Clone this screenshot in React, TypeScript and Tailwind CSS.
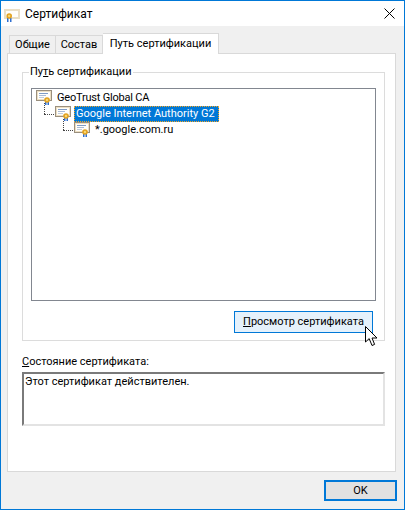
function CertIcon() {
  return (
    <svg width="16" height="16" viewBox="0 0 16 16" className="shrink-0">
      <rect x="0.5" y="0.5" width="15" height="10" fill="#fffefb" stroke="#9a8f7e" />
      <rect x="1.5" y="1.5" width="13" height="8" fill="none" stroke="#ecdfc4" />
      <rect x="3" y="3" width="9" height="1" fill="#7f9cc6" />
      <rect x="3" y="5" width="7" height="1" fill="#a9bbd6" />
      <rect x="3" y="7" width="5" height="1" fill="#c2cede" />
      <rect x="9" y="11" width="1.5" height="4" fill="#2f6fd0" />
      <rect x="11.5" y="11" width="1.5" height="4" fill="#2f6fd0" />
      <circle cx="11" cy="10" r="2.8" fill="#e3a21f" />
      <circle cx="11" cy="10" r="1.2" fill="#f7d774" />
    </svg>
  );
}

function TitleIcon() {
  return (
    <svg width="16" height="13" viewBox="0 0 16 13" className="mt-[8px] shrink-0 self-start">
      <rect x="0" y="0" width="16" height="10" fill="#eadfc6" />
      <rect x="2" y="2" width="12" height="6" fill="#fffefb" />
      <rect x="3" y="9" width="1.5" height="4" fill="#2f6fd0" />
      <rect x="6" y="9" width="1.5" height="4" fill="#2f6fd0" />
      <circle cx="5.2" cy="7" r="2.8" fill="#e3a21f" />
      <circle cx="5.2" cy="7" r="1.2" fill="#f7d774" />
    </svg>
  );
}

function TreeRow({ depth, label, selected }: { depth: number; label: string; selected?: boolean }) {
  return (
    <div className={`relative flex h-[16px] items-center ${depth === 0 ? "pl-[4px]" : depth === 1 ? "pl-[23px]" : "pl-[42px]"}`}>
      {depth > 0 && (
        <>
          <div className={`absolute top-[-3px] h-[11px] w-0 border-l border-dotted border-[#444] ${depth === 1 ? "left-[12px]" : "left-[31px]"}`} />
          <div className={`absolute top-[8px] h-0 w-[10px] border-t border-dotted border-[#444] ${depth === 1 ? "left-[12px]" : "left-[31px]"}`} />
        </>
      )}
      <CertIcon />
      {selected ? (
        <span className="ml-[3px] flex h-[16px] w-[145px] items-center whitespace-nowrap border border-dotted border-[#f5a623] bg-[#0078d7] px-[1px] text-white">{label}</span>
      ) : (
        <span className={`ml-[5px] whitespace-nowrap ${depth === 0 ? "tracking-[-0.2px]" : ""}`}>{label}</span>
      )}
    </div>
  );
}

export default function App() {
  return (
    <div className="relative flex h-[510px] w-[405px] flex-col overflow-hidden border border-[#0078d7] bg-[#f0f0f0] font-['Roboto','Noto_Sans',sans-serif] text-[11px] leading-[16px] text-black">
      {/* Title bar */}
      <div className="flex h-[25px] shrink-0 items-center bg-white pl-[3px] pr-[9px]">
        <TitleIcon />
        <span className="ml-[5px] flex-1 text-[12px]">Сертификат</span>
        <svg width="11" height="11" viewBox="0 0 11 11">
          <path d="M0.5 0.5 L10.5 10.5 M10.5 0.5 L0.5 10.5" stroke="#000" strokeWidth="1" fill="none" />
        </svg>
      </div>

      {/* Tabs */}
      <div className="flex h-[27px] shrink-0 items-end pl-[8px]">
        <div className="flex h-[18px] w-[47px] items-center justify-center border border-b-0 border-[#d9d9d9] bg-[#f0f0f0]">Общие</div>
        <div className="flex h-[18px] w-[47px] items-center justify-center border border-b-0 border-l-0 border-[#d9d9d9] bg-[#f0f0f0]">Состав</div>
        <div className="relative top-[1px] z-10 flex h-[21px] w-[116px] items-center justify-center border border-b-0 border-l-0 border-[#d9d9d9] bg-white">Путь сертификации</div>
      </div>

      {/* Panel */}
      <div className="ml-[6px] flex h-[419px] w-[389px] shrink-0 flex-col border border-[#d9d9d9] bg-white pl-[14px] pt-[10px]">
        <fieldset className="flex w-[363px] flex-col border border-[#dcdcdc] px-[8px] pb-[7px]">
          <legend className="-ml-[2px] px-[1px]">Пу<span className="underline">т</span>ь сертификации</legend>
          <div className="mt-[8px] h-[213px] border border-[#828790] bg-white pt-[1px]">
            <TreeRow depth={0} label="GeoTrust Global CA" />
            <TreeRow depth={1} label="Google Internet Authority G2" selected />
            <TreeRow depth={2} label="*.google.com.ru" />
          </div>
          <div className="mt-[10px] flex justify-end pr-[3px]">
            <button className="h-[22px] w-[139px] border border-[#0078d7] bg-[#e5f1fb] text-center"><span className="underline">П</span>росмотр сертификата</button>
          </div>
        </fieldset>
        <label className="mt-[13px] block"><span className="underline">С</span>остояние сертификата:</label>
        <div className="mt-[2px] h-[54px] w-[363px] border-[2px] border-[#e3e3e3] border-l-[#7a7a7a] border-t-[#7a7a7a] bg-white pl-[1px]">Этот сертификат действителен.</div>
      </div>

      {/* Footer */}
      <div className="flex flex-1 items-start justify-end pr-[7px] pt-[8px]">
        <button className="h-[21px] w-[73px] border-[2px] border-[#0078d7] bg-[#e1e1e1] text-center leading-[16px]">OK</button>
      </div>

      {/* Mouse pointer */}
      <svg width="14" height="21" viewBox="0 0 14 21" className="absolute left-[364px] top-[325px]">
        <path d="M0.5 0.5 V16 L4.2 12.6 L7 19.5 L9.6 18.4 L7 12 H12 Z" fill="#fff" stroke="#000" strokeWidth="1" />
      </svg>
    </div>
  );
}
